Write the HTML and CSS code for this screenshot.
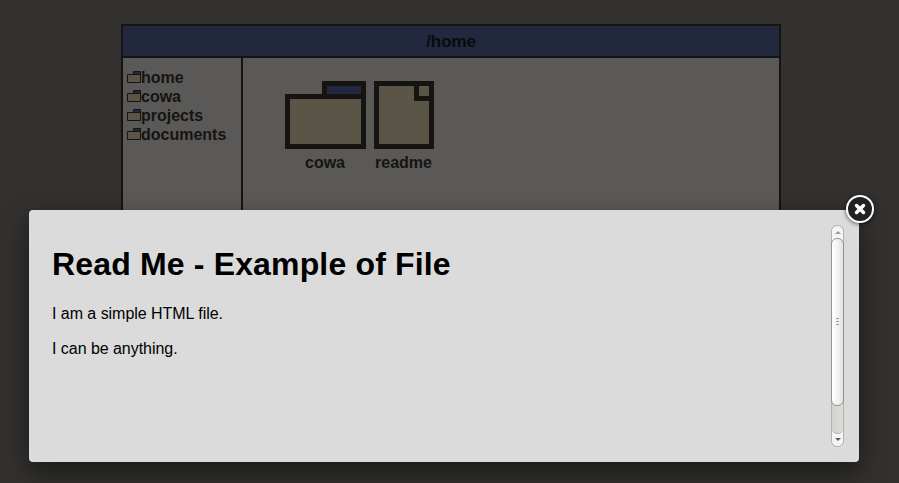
FILE: index.html
```
<!DOCTYPE html>
<html lang="en">
<head>
<meta charset="utf-8">
<title>/home</title>
<link rel="stylesheet" href="styles.css">
</head>
<body>
<main class="window">
  <header class="titlebar">/home</header>
  <div class="content">
    <nav class="sidebar">
      <a class="place"><svg class="mini" viewBox="0 0 14 12"><path class="tab" d="M6.5.5h7v3h-7z"/><path class="body" d="M.5 3.5h13v8H.5z"/></svg>home</a>
      <a class="place"><svg class="mini" viewBox="0 0 14 12"><path class="tab" d="M6.5.5h7v3h-7z"/><path class="body" d="M.5 3.5h13v8H.5z"/></svg>cowa</a>
      <a class="place"><svg class="mini" viewBox="0 0 14 12"><path class="tab" d="M6.5.5h7v3h-7z"/><path class="body" d="M.5 3.5h13v8H.5z"/></svg>projects</a>
      <a class="place"><svg class="mini" viewBox="0 0 14 12"><path class="tab" d="M6.5.5h7v3h-7z"/><path class="body" d="M.5 3.5h13v8H.5z"/></svg>documents</a>
    </nav>
    <section class="files">
      <div class="item">
        <svg class="big" width="81" height="68" viewBox="0 0 81 68"><path class="tab" d="M39.5 2.5h39v13h-39z"/><path class="body" d="M2.5 15.5h76v50h-76z"/></svg>
        <span>cowa</span>
      </div>
      <div class="item">
        <svg class="big" width="60" height="68" viewBox="0 0 60 68"><path class="body" d="M2.5 2.5h55v63h-55zM42.5 2.5h15v15h-15z"/></svg>
        <span>readme</span>
      </div>
    </section>
  </div>
</main>
<div class="dialog">
  <article class="document">
    <h1>Read Me - Example of File</h1>
    <p>I am a simple HTML file.</p>
    <p>I can be anything.</p>
  </article>
  <div class="scrollbar">
    <div class="arrow"><svg width="6" height="3" viewBox="0 0 6 3"><path d="M3 0 6 3H0z" fill="#9b9a98"/></svg></div>
    <div class="thumb"><i></i><i></i><i></i></div>
    <div class="track"></div>
    <div class="arrow down"><svg width="6" height="3" viewBox="0 0 6 3"><path d="M0 0h6L3 3z" fill="#605e5b"/></svg></div>
  </div>
  <svg class="close" width="36" height="36" viewBox="0 0 36 36"><circle cx="18" cy="17" r="13" fill="#222" stroke="#fff" stroke-width="2"/><path d="m14.5 13.500 7 7m0-7-7 7" stroke="#fff" stroke-width="3.500" stroke-linecap="round"/></svg>
</div>
</body>
</html>
```
FILE: styles.css
```
* { box-sizing: border-box; }
body {
  margin: 0;
  height: 483px;
  overflow: hidden;
  padding-top: 24px;
  background: #32312f;
  color: #151412;
  font: 16px/19px "Liberation Sans", Arial, sans-serif;
}
.window {
  width: 660px;
  height: 430px;
  margin-left: 121px;
  border: 2px solid #151412;
  background: #5a5957;
  font-weight: bold;
}
.titlebar {
  height: 32px;
  border-bottom: 2px solid #151412;
  background: #22283d;
  color: #0b0b0d;
  line-height: 32px;
  text-align: center;
  font-size: 17px;
  letter-spacing: -.1px;
}
.content { display: flex; height: 394px; }
.sidebar {
  width: 120px;
  padding: 10px 4px;
  border-right: 2px solid #151412;
}
.place { display: flex; height: 19px; }
.mini { width: 14px; height: 12px; margin-top: 3px; stroke-width: 1; }
.tab { fill: #22283d; stroke: #151412; }
.body { fill: #5a5547; stroke: #151412; }
.files { display: flex; align-items: flex-start; gap: 8px; padding: 23px 42px; }
.item { display: flex; flex-direction: column; align-items: center; gap: 4px; }
.item span { margin-right: 1px; }
.big { stroke-width: 5; }
.dialog {
  position: absolute;
  left: 29px;
  top: 210px;
  width: 830px;
  height: 252px;
  padding: 15px;
  display: flex;
  justify-content: space-between;
  border-radius: 4px;
  background: #dbdbdb;
  color: #000;
  box-shadow: 0 10px 25px rgba(0, 0, 0, .5);
}
.document { padding: 21px 8px; }
h1 { margin: 0 0 21px; font-size: 32px; line-height: 37px; letter-spacing: .16px; }
p { margin: 0 0 16px; letter-spacing: -.04px; }
.scrollbar {
  width: 13px;
  height: 222px;
  display: flex;
  flex-direction: column;
  border: 1px solid #b5b2ae;
  border-radius: 6px;
  background: #d5d3d0;
}
.arrow {
  height: 18px;
  margin-bottom: -6px;
  display: flex;
  justify-content: center;
  padding-top: 5px;
  border-radius: 6px 6px 0 0;
  background: #f5f5f4;
}
.thumb {
  position: relative;
  z-index: 1;
  height: 168px;
  flex: none;
  margin: 0 -1px;
  display: flex;
  flex-direction: column;
  align-items: center;
  justify-content: center;
  gap: 2px;
  padding-bottom: 1px;
  border: 1px solid #96928e;
  border-radius: 6px;
  background: linear-gradient(90deg, #fff, #f4f3f2 50%, #e4e2df);
}
.thumb i { width: 3px; height: 1px; background: #9b9996; }
.track {
  position: relative;
  height: 34px;
  flex: none;
  margin-top: -6px;
  border-bottom: 1px solid #b5b2ae;
  border-radius: 0 0 6px 6px;
  background: linear-gradient(90deg, #d3d1cd, #dddcd9);
}
.arrow.down {
  height: 18px;
  margin: -6px 0 0;
  padding-top: 10px;
  border-radius: 0 0 6px 6px;
}
.close {
  position: absolute;
  top: -18px;
  right: -19px;
  fill: none;
  filter: drop-shadow(0 1px 2px rgba(0, 0, 0, .6));
}
```
